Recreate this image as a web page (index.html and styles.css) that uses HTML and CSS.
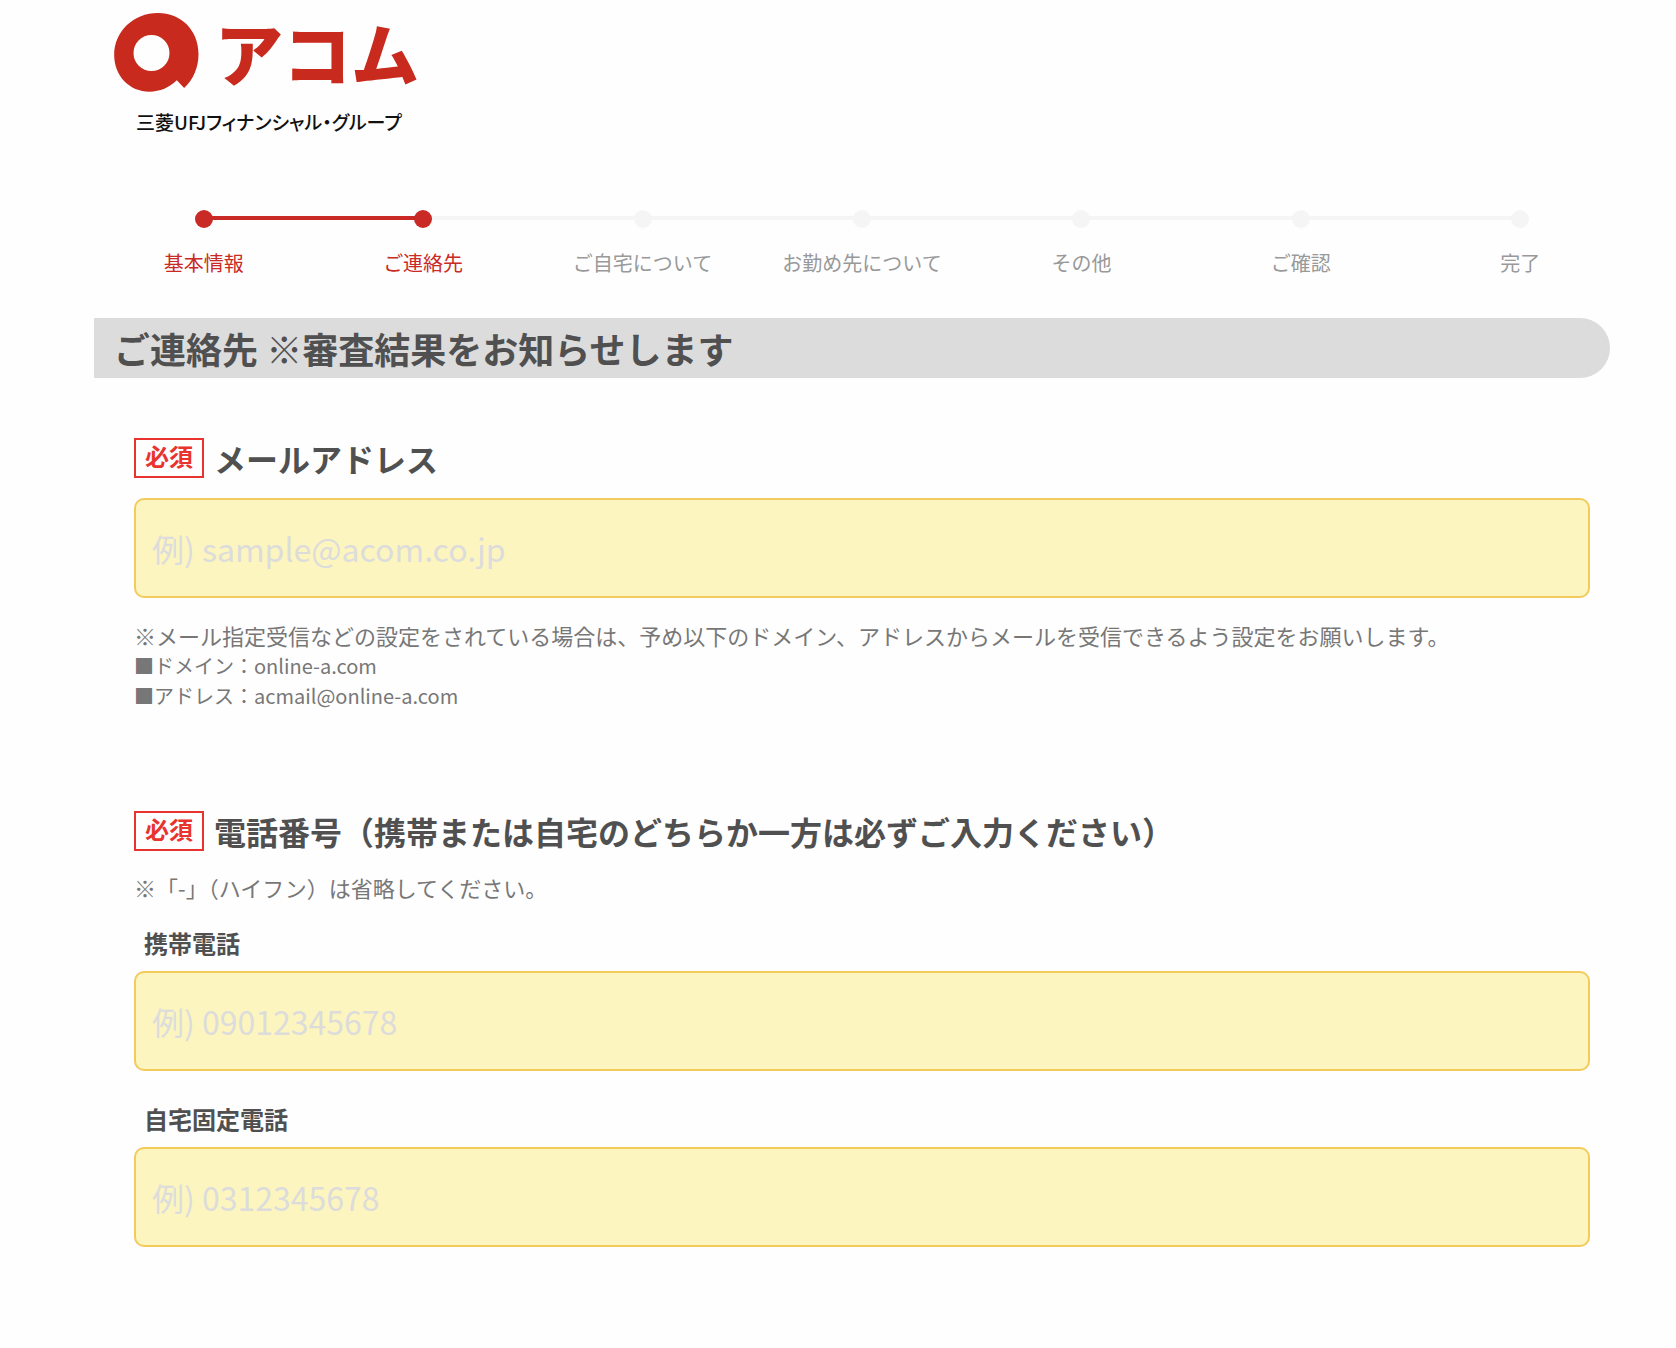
FILE: index.html
```html
<!DOCTYPE html>
<html lang="ja">
<head>
    <meta charset="UTF-8">
    <meta name="viewport" content="width=device-width, initial-scale=1.0">
    <title>ご連絡先</title>
    <link rel="stylesheet" href="styles.css">
</head>
<body>

    <!-- Header -->
    <header class="header">
        <div class="logo">
            <svg class="logo-mark" viewBox="74 39 254 237" width="85" height="79" aria-hidden="true">
                <path fill="#c92a1e" fill-rule="evenodd" d="M284 264C312 238 327 202 327 162C327 91 275 39 205 39C133 39 74 94 74 165C74 228 120 275 180 275C211 275 240 263 262 241ZM186 105A54 54 0 1 1 186 213A54 54 0 1 1 186 105Z"/>
            </svg>
            <span class="logo-name">アコム</span>
        </div>
        <p class="logo-group">三菱UFJフィナンシャル・グループ</p>
    </header>

    <main class="main">
        <!-- Progress -->
        <ol class="steps">
            <li class="step done">基本情報</li>
            <li class="step done">ご連絡先</li>
            <li class="step">ご自宅について</li>
            <li class="step">お勤め先について</li>
            <li class="step">その他</li>
            <li class="step">ご確認</li>
            <li class="step">完了</li>
        </ol>

        <h1 class="title">ご連絡先 ※審査結果をお知らせします</h1>

        <form class="form">
            <!-- Mail address -->
            <section class="field">
                <div class="field-head">
                    <span class="required">必須</span>
                    <label class="field-name" for="mail">メールアドレス</label>
                </div>
                <input class="text-box" type="email" id="mail" placeholder="例) sample@acom.co.jp">
                <div class="notes">
                    <p class="note">※メール指定受信などの設定をされている場合は、予め以下のドメイン、アドレスからメールを受信できるよう設定をお願いします。</p>
                    <p class="note-small">■ドメイン：online-a.com</p>
                    <p class="note-small">■アドレス：acmail@online-a.com</p>
                </div>
            </section>

            <!-- Phone number -->
            <section class="field">
                <div class="field-head">
                    <span class="required">必須</span>
                    <h2 class="field-name">電話番号（携帯または自宅のどちらか一方は必ずご入力ください）</h2>
                </div>
                <p class="note">※「-」（ハイフン）は省略してください。</p>
                <div class="phone">
                    <label class="phone-label" for="mobile">携帯電話</label>
                    <input class="text-box" type="tel" id="mobile" placeholder="例) 09012345678">
                </div>
                <div class="phone">
                    <label class="phone-label" for="home">自宅固定電話</label>
                    <input class="text-box" type="tel" id="home" placeholder="例) 0312345678">
                </div>
            </section>
        </form>
    </main>

</body>
</html>
```
FILE: styles.css
```css
* {
    margin: 0;
    padding: 0;
    box-sizing: border-box;
}

body {
    font-family: "Noto Sans CJK JP", sans-serif;
    background-color: #fefefe;
    color: #505050;
    padding: 0 46px 60px 94px;
}

/* Header */
.header {
    padding: 12px 20px 0;
}

.logo {
    display: flex;
    align-items: center;
    gap: 16px;
    height: 80px;
}

.logo-name {
    color: #c92a1e;
    font-size: 68px;
    font-weight: 900;
    line-height: 80px;
}

.logo-group {
    margin: 16px 0 0 22px;
    color: #111;
    font-size: 19px;
    font-weight: 500;
    line-height: 28px;
    font-feature-settings: "palt";
}

/* Progress */
.steps {
    display: flex;
    margin-top: 74px;
    list-style: none;
}

.step {
    flex: 1;
    position: relative;
    padding-top: 38px;
    color: #999;
    font-size: 20px;
    line-height: 30px;
    text-align: center;
}

.step::before {
    content: "";
    position: absolute;
    top: 0;
    left: calc(50% - 9px);
    width: 18px;
    height: 18px;
    border-radius: 50%;
    background-color: #f5f5f5;
}

.step::after {
    content: "";
    position: absolute;
    top: 6px;
    right: 50%;
    width: 100%;
    height: 4px;
    background-color: #f5f5f5;
    z-index: -1;
}

.step:first-child::after {
    display: none;
}

.step.done {
    color: #c92a26;
}

.step.done::before,
.step.done::after {
    background-color: #c92a26;
}

.title {
    margin: 40px 20px 0 0;
    padding-left: 20px;
    border-radius: 0 30px 30px 0;
    background-color: #dcdcdc;
    font-size: 36px;
    font-weight: 700;
    line-height: 60px;
}

/* Form */
.form {
    padding: 60px 40px 0;
}

.field {
    margin-bottom: 100px;
}

.field-head {
    display: flex;
    align-items: center;
    gap: 10px;
    height: 40px;
    margin-bottom: 20px;
}

.required {
    height: 40px;
    padding: 0 9px;
    border: 2px solid #e8332e;
    color: #e8332e;
    font-size: 24px;
    font-weight: 700;
    line-height: 32px;
}

.field-name {
    font-size: 32px;
    font-weight: 700;
    line-height: 40px;
}

.text-box {
    display: block;
    width: 100%;
    height: 100px;
    padding: 0 16px;
    border: 2px solid #f2cb5c;
    border-radius: 10px;
    background-color: #fdf5bf;
    color: #505050;
    font-family: inherit;
    font-size: 32px;
}

.text-box::placeholder {
    color: #dcdcdc;
}

.notes {
    margin-top: 21px;
}

.note {
    color: #777;
    font-size: 22px;
    line-height: 32px;
}

.note-small {
    color: #777;
    font-size: 20px;
    line-height: 30px;
}

.phone {
    margin-top: 20px;
}

.phone + .phone {
    margin-top: 28px;
}

.phone-label {
    display: block;
    padding: 0 10px 8px;
    font-size: 24px;
    font-weight: 700;
    line-height: 40px;
}
```
